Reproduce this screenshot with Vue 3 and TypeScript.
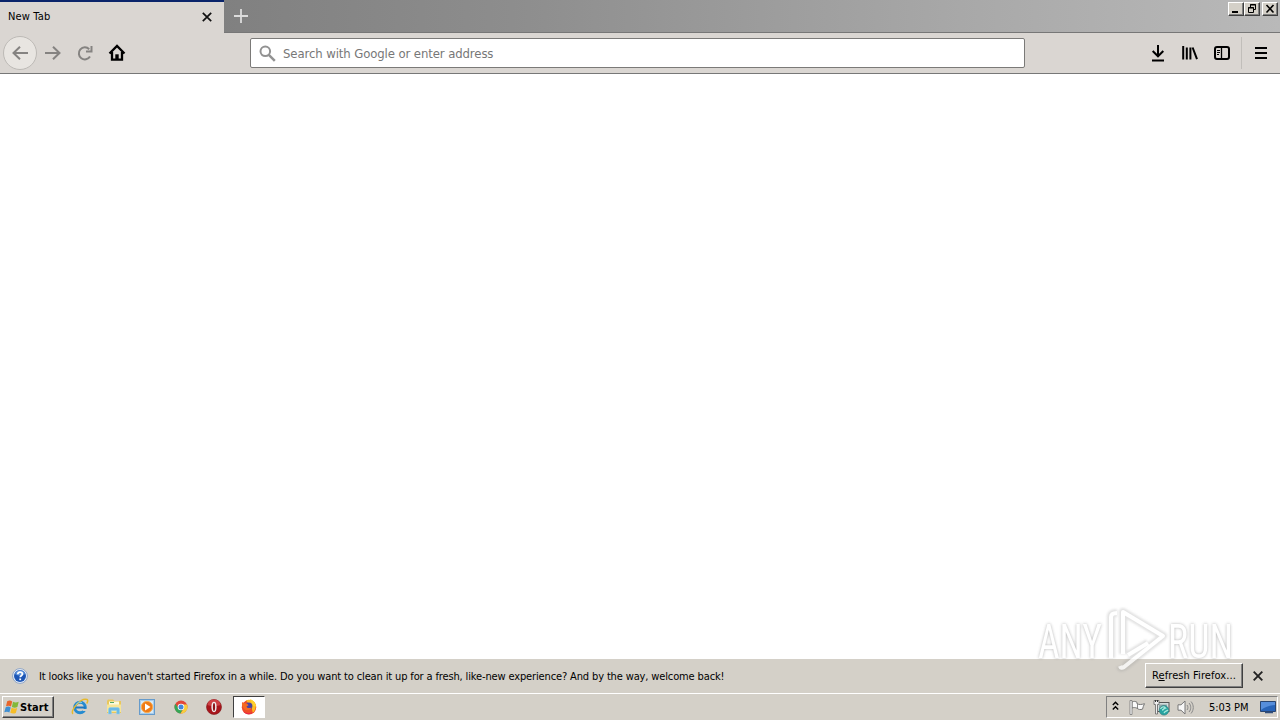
<script setup lang="ts">
import { ref } from 'vue'

const address = ref('')
const showNotice = ref(true)
const tabTitle = 'New Tab'
const notice =
  "It looks like you haven't started Firefox in a while. Do you want to clean it up for a fresh, like-new experience? And by the way, welcome back!"
const clock = '5:03 PM'
</script>

<template>
  <div class="desktop">
    <header class="titlebar">
      <div class="tab">
        <span class="tab-title">{{ tabTitle }}</span>
        <svg class="tab-close" width="10" height="10" viewBox="0 0 10 10">
          <path d="M.8.8l8.400 8.400M9.200.8L.8 9.200" stroke="#111" stroke-width="1.700" />
        </svg>
      </div>
      <svg class="new-tab" width="14" height="14" viewBox="0 0 14 14">
        <path d="M7 0v14M0 7h14" stroke="#dcdcdc" stroke-width="1.800" />
      </svg>
      <div class="window-buttons">
        <button class="win-btn">
          <svg width="14" height="12" viewBox="0 0 14 12"><path d="M3 9h6" stroke="#000" stroke-width="2" /></svg>
        </button>
        <button class="win-btn">
          <svg width="14" height="12" viewBox="0 0 14 12" fill="none" stroke="#000">
            <path d="M5.500 4V1.500h5v5H9M5 2h6M3.500 4.500h5v5h-5zM3 5h6" />
          </svg>
        </button>
        <button class="win-btn win-close">
          <svg width="14" height="12" viewBox="0 0 14 12"><path d="M3.500 2l7 7.500M10.500 2l-7 7.500" stroke="#000" stroke-width="1.600" /></svg>
        </button>
      </div>
    </header>

    <nav class="toolbar">
      <div class="back">
        <svg width="16" height="16" viewBox="0 0 16 16" class="nav-icon dim">
          <path d="M16 8H1.500M8 1.800L1.500 8 8 14.200" />
        </svg>
      </div>
      <svg width="16" height="16" viewBox="0 0 16 16" class="nav-icon dim forward">
        <path d="M0 8h14.500M8 1.800L14.500 8 8 14.200" />
      </svg>
      <svg width="16" height="16" viewBox="0 0 16 16" class="nav-icon dim reload">
        <path d="M13 11.500A6 6 0 1 1 12.200 4.200M9 6.500h5.500V1" />
      </svg>
      <svg width="18" height="18" viewBox="0 0 18 18" class="nav-icon home">
        <path d="M1.500 9.500L9 2l7.500 7.500M4 8v7.600h10V8" stroke-width="2.300" />
        <path d="M7.300 16v-5.700h3.400V16z" fill="#000" stroke="none" />
      </svg>
      <div class="urlbar">
        <svg width="17" height="17" viewBox="0 0 17 17" fill="none" stroke="#929292">
          <circle cx="6.300" cy="6.300" r="4.800" stroke-width="2" />
          <path d="M9.800 9.800l6 6" stroke-width="2.500" />
        </svg>
        <input v-model="address" type="text" placeholder="Search with Google or enter address" />
      </div>
      <div class="tools">
        <svg width="16" height="18" viewBox="0 0 16 18" class="nav-icon">
          <path d="M8 1v11M2.700 7L8 12.300 13.300 7M2 16.500h12" />
        </svg>
        <svg width="16" height="16" viewBox="0 0 16 16" class="nav-icon library">
          <path d="M1.200 1v13.500M4.800 2.500v12M8.400 2.500v12M10.600 2.500L15 14.200" />
        </svg>
        <svg width="16" height="14" viewBox="0 0 16 14" class="nav-icon sidebar">
          <rect x="1" y="1" width="14" height="12" rx="2" />
          <path d="M7.500 1v12" stroke-width="1.300" />
          <path d="M3 4.500h3M3 6.500h3M3 8.500h2" stroke-width="1" />
        </svg>
        <span class="tool-divider"></span>
        <svg width="12" height="12" viewBox="0 0 12 12" class="nav-icon">
          <path d="M0 1h12M0 6h12M0 11h12" />
        </svg>
      </div>
    </nav>

    <main class="page"></main>

    <section v-if="showNotice" class="notice">
      <svg width="16" height="16" viewBox="0 0 16 16" class="help">
        <circle cx="8" cy="8" r="7.400" fill="#e9f0fa" stroke="#8fa4c4" />
        <circle cx="8" cy="8" r="6" fill="#1d56b5" />
        <path d="M3 6a5.200 5.200 0 0 1 10 0c-3 2-7 2-10 0z" fill="#5c92dc" />
        <path d="M5.800 6.300c0-3 4.600-2.800 4.600-.2 0 1.700-2.200 1.600-2.200 3.200" fill="none" stroke="#fff" stroke-width="1.700" />
        <rect x="7.300" y="10.500" width="1.800" height="1.700" fill="#fff" />
      </svg>
      <span class="notice-text">{{ notice }}</span>
      <button class="refresh"><span>R<u>e</u>fresh Firefox...</span></button>
      <svg class="notice-close" width="10" height="10" viewBox="0 0 10 10" @click="showNotice = false">
        <path d="M.7.7l8.600 8.600M9.300.7L.7 9.300" stroke="#222" stroke-width="1.900" />
      </svg>
    </section>

    <footer class="taskbar">
      <button class="start">
        <svg width="16" height="16" viewBox="0 0 16 16">
          <path d="M3.200 2.200c2-1 3.500-.8 5 .2L7 7.500c-1.700-1-3.200-1-5-.2z" fill="#e8652b" />
          <path d="M9 2.800c1.800 1 3.500.9 5.700 0L13.400 8c-2 .9-3.700.8-5.500-.1z" fill="#83b83b" />
          <path d="M1.700 8.200c1.900-.9 3.500-.8 5 .2l-1.300 5.100c-1.600-1-3.200-1-5.100-.2z" fill="#3f8fd2" />
          <path d="M7.600 8.800c1.800 1 3.500.9 5.600.1L11.800 14c-2 .9-3.700.8-5.500-.2z" fill="#f6bd27" />
        </svg>
        <span>Start</span>
      </button>

      <div class="launchers">
        <svg width="18" height="18" viewBox="0 0 18 18">
          <circle cx="9" cy="9.500" r="5.300" fill="none" stroke="#258bd0" stroke-width="3" />
          <path d="M4 9.500h10.500" stroke="#1c76c0" stroke-width="2" />
          <path d="M11 11h6v2h-5z" fill="#d4d0c8" />
          <path d="M2 15.800C-1.500 13 10-1 16 1.500c1.200.6.700 2.500-.3 4" fill="none" stroke="#e6b92c" stroke-width="1.500" />
          <path d="M5 6.500a5 5 0 0 1 6-2" fill="none" stroke="#7bcbed" />
        </svg>
        <svg width="18" height="18" viewBox="0 0 18 18">
          <path d="M2 3l1-1.500h5L9.500 3H16v12H2z" fill="#e9c75d" />
          <path d="M4 3.500h10v5H4z" fill="#fafadd" />
          <path d="M5 4.500h4" stroke="#55a862" />
          <path d="M2 6.500h14V14H2z" fill="#f7e596" />
          <path d="M3.500 16v-4.500c0-1.500 1-2 2-2h7c1.500 0 2 .8 2 2V16h-2.800v-3.500H6.300V16z" fill="#69b9e6" stroke="#91d0ef" stroke-width=".6" />
        </svg>
        <svg width="18" height="18" viewBox="0 0 18 18">
          <rect x="1.500" y="1.500" width="15" height="15" fill="#a8cdec" stroke="#669bcb" />
          <rect x="3" y="3" width="12" height="12" fill="#d6e9f7" />
          <circle cx="9" cy="9" r="5.700" fill="#ef7b16" stroke="#f9ae55" />
          <path d="M7 5.500L12.500 9 7 12.500z" fill="#fff" />
        </svg>
        <svg width="18" height="18" viewBox="0 0 18 18">
          <circle cx="9" cy="9" r="6.500" fill="#e2473a" />
          <path d="M3.300 5.800A6.500 6.500 0 0 0 8.500 15.500L11.600 10 6.400 10z" fill="#35a657" />
          <path d="M15 6.400A6.500 6.500 0 0 1 8.500 15.500L11.700 10.500 11 6.400z" fill="#f7ce3e" />
          <circle cx="9" cy="9" r="3.300" fill="#fff" />
          <circle cx="9" cy="9" r="2.500" fill="#4286dc" />
        </svg>
        <svg width="18" height="18" viewBox="0 0 18 18">
          <circle cx="9" cy="9" r="7.500" fill="#a8161c" stroke="#7f1519" stroke-width=".6" />
          <path d="M2.500 7a6.600 6.600 0 0 1 13 0c-3.500 1.500-9.500 1.500-13 0z" fill="#cf4144" />
          <ellipse cx="9" cy="9" rx="2.600" ry="5.200" fill="#eee" />
          <ellipse cx="9" cy="9" rx="1.100" ry="4" fill="#8e1418" />
        </svg>
      </div>

      <div class="task-active">
        <svg width="18" height="18" viewBox="0 0 18 18">
          <circle cx="9" cy="9.300" r="7.200" fill="#ef4d28" />
          <path d="M6 2.500C9 1 13 2 15 5c1.500 3 .5 8-2.500 10 .5-5-3-8-6.500-12.500z" fill="#ffbd22" />
          <path d="M10 1c3 1 5.800 4 6.100 7.500L13 8z" fill="#ffd22d" />
          <circle cx="8.800" cy="8" r="3.600" fill="#4a43a1" />
          <path d="M2 4l2 1.200 3 .3 1.500 1.700-2 1.300c.5 2 3.500 2 5 .7 0 3-4.500 4-7 2C2.600 9.500 1.600 7 2 4z" fill="#f56b20" />
          <path d="M2.500 12c3 4 8 4 11 1.500-2 3.500-8.500 4-11-1.500z" fill="#e6254c" />
        </svg>
      </div>

      <div class="tray">
        <svg class="chevrons" width="7" height="10" viewBox="0 0 7 10" fill="none" stroke="#000" stroke-width="1.400">
          <path d="M.8 4l2.700-2.700L6.200 4M.8 8.500l2.700-2.700 2.700 2.700" />
        </svg>
        <svg class="flag" width="17" height="17" viewBox="0 0 17 17">
          <path d="M3 3c2-1 3.500-.7 5 .3v1.500c2 1 4.500.9 7.500-.1-.9 1.800-1.500 3.500-2 5.500-2 .6-4 .5-5.500-1-1.800-.8-3.200-.9-5-.2z" fill="#fafafa" stroke="#777" />
          <path d="M8.500 4v5" stroke="#888" />
          <path d="M1 1.500h2v14H1z" fill="#fff" stroke="#777" stroke-width=".8" />
        </svg>
        <svg class="network" width="17" height="17" viewBox="0 0 17 17">
          <rect x="4" y="3.500" width="12" height="9" fill="#d3dcdc" stroke="#555" />
          <rect x="6" y="5.500" width="8" height="5" fill="#8fa8aa" />
          <path d="M1 1.500h5v4H4.500V15H2.500V5.500H1z" fill="#eee" stroke="#666" stroke-width=".8" />
          <path d="M2.500 1v2M4.500 1v2" stroke="#333" />
          <circle cx="11" cy="11.300" r="4.800" fill="#27a4a1" stroke="#397e80" stroke-width=".7" />
          <path d="M7.500 10c1.500-3 4-2.500 5-1-2 0-1.500 2-3.500 2M11 14c1-2 3-2 4-3" fill="none" stroke="#a6e7d9" stroke-width="1.300" />
        </svg>
        <svg class="speaker" width="17" height="17" viewBox="0 0 17 17" fill="none">
          <path d="M1 5.800h3L8 2v13l-4-3.800H1z" fill="#f7f7f7" stroke="#777" />
          <path d="M10 6c1.200 1.500 1.200 3.500 0 5M12 4c2.300 2.500 2.300 6.500 0 9M14 2.500c3 3.500 3 8.500 0 12" stroke="#888" />
        </svg>
        <span class="clock">{{ clock }}</span>
        <svg class="show-desktop" width="16" height="13" viewBox="0 0 16 13">
          <path d="M.5.500h15v10H.5z" fill="#2864b8" stroke="#294570" />
          <path d="M1 1h14v3C10 4 5 6 1 9z" fill="#568edb" />
          <path d="M5 11.500h8" stroke="#314e7c" stroke-width="1.500" />
        </svg>
      </div>
    </footer>

    <svg class="watermark" width="230" height="76" viewBox="0 0 230 76">
      <g fill="none" stroke-linejoin="round">
        <path class="mark-halo" d="M77 54V13q0-4 6-4M89 50V8l40 24-39 31q-3 2-4-1M94 51l20-12" />
        <path class="mark-line" d="M77 54V13q0-4 6-4M89 50V8l40 24-39 31q-3 2-4-1M94 51l20-12" />
      </g>
      <text x="4" y="54" textLength="64" lengthAdjust="spacingAndGlyphs">ANY</text>
      <text x="134" y="54" textLength="65" lengthAdjust="spacingAndGlyphs">RUN</text>
    </svg>
  </div>
</template>

<style>
body {
  margin: 0;
  overflow: hidden;
}
</style>

<style scoped>
.desktop {
  position: relative;
  display: flex;
  flex-direction: column;
  width: 1280px;
  height: 720px;
  background: #fff;
  font-family: 'DejaVu Sans Condensed', 'DejaVu Sans', sans-serif;
  font-size: 11px;
  font-stretch: condensed;
  color: #000;
}

.desktop * {
  box-sizing: border-box;
}

svg {
  display: block;
  flex: none;
}

button {
  margin: 0;
  padding: 0;
  font: inherit;
  color: inherit;
  background: #d4d0c8;
  border: 1px solid;
  border-color: #fff #404040 #404040 #fff;
  border-radius: 0;
  box-shadow: inset -1px -1px #808080;
}

.titlebar {
  display: flex;
  flex: none;
  height: 33px;
  background: linear-gradient(90deg, #808080 17%, #8d8d8d 40%, #a8a8a8 75%, #b9b9b9);
  border-bottom: 1px solid #777;
}

.tab {
  display: flex;
  align-items: center;
  justify-content: space-between;
  width: 224px;
  height: 33px;
  padding: 0 12px 2px 8px;
  background: #dad6d2;
  border-top: 2px solid #0a246a;
}

.tab-title {
  letter-spacing: 0.15px;
}

.new-tab {
  margin: 9px 0 0 10px;
}

.window-buttons {
  display: flex;
  margin: 2px 2px 0 auto;
}

.win-btn {
  width: 16px;
  height: 14px;
}

.win-close {
  margin-left: 2px;
}

.toolbar {
  display: flex;
  flex: none;
  align-items: center;
  height: 41px;
  padding-left: 3px;
  background: #dad6d2;
  border-bottom: 1px solid #777;
}

.nav-icon {
  fill: none;
  stroke: #000;
  stroke-width: 2;
}

.dim {
  stroke: #858381;
}

.back {
  display: flex;
  align-items: center;
  justify-content: center;
  width: 34px;
  height: 34px;
  background: #e8e5e1;
  border: 1px solid #bdbab6;
  border-radius: 50%;
}

.forward {
  margin-left: 8px;
}

.reload {
  margin-left: 16px;
}

.home {
  margin-left: 15px;
}

.urlbar {
  display: flex;
  align-items: center;
  width: 775px;
  height: 30px;
  margin-left: 124px;
  padding-left: 8px;
  background: #fff;
  border: 1px solid #7b7a78;
  border-radius: 2px;
}

.urlbar input {
  flex: 1;
  height: 24px;
  margin-left: 7px;
  padding: 0;
  font: 13px 'DejaVu Sans Condensed', 'DejaVu Sans', sans-serif;
  letter-spacing: -0.1px;
  border: 0;
  outline: 0;
}

.urlbar input::placeholder {
  color: #777;
}

.tools {
  display: flex;
  align-items: center;
  margin-left: auto;
  padding-right: 13px;
}

.library {
  margin-left: 16px;
}

.sidebar {
  margin-left: 16px;
}

.tool-divider {
  width: 1px;
  height: 32px;
  margin: 0 13px 0 11px;
  background: #c1beba;
}

.page {
  flex: 1;
}

.notice {
  display: flex;
  flex: none;
  align-items: center;
  height: 34px;
  padding-left: 12px;
  background: #d4d0c8;
}

.notice-text {
  margin-left: 11px;
  white-space: nowrap;
  letter-spacing: -0.136px;
}

.refresh {
  width: 98px;
  height: 25px;
  margin: 0 10px 2px auto;
}

.refresh span {
  letter-spacing: 0.08px;
}

.notice-close {
  margin-right: 17px;
}

.taskbar {
  display: flex;
  flex: none;
  align-items: center;
  height: 27px;
  padding: 0 2px;
  background: #d4d0c8;
  border-top: 1px solid #fff;
}

.start {
  display: flex;
  align-items: center;
  width: 52px;
  height: 22px;
  padding-left: 1px;
  font-weight: 700;
}

.start span {
  letter-spacing: 0.1px;
}

.launchers {
  display: flex;
  gap: 15.6px;
  margin-left: 17px;
}

.task-active {
  display: flex;
  align-items: center;
  justify-content: center;
  width: 32px;
  height: 22px;
  margin-left: 10px;
  background: #fff;
  border: 1px solid;
  border-color: #404040 #fff #fff #404040;
}

.tray {
  display: flex;
  align-items: center;
  width: 172px;
  height: 22px;
  margin-left: auto;
  padding-left: 5px;
  border: 1px solid;
  border-color: #808080 #fff #fff #808080;
}

.chevrons {
  margin-bottom: 2px;
}

.flag {
  margin-left: 10px;
}

.network {
  margin-left: 7px;
}

.speaker {
  margin-left: 7px;
}

.clock {
  width: 50px;
  margin-left: 15px;
  white-space: nowrap;
  letter-spacing: -0.05px;
}

.show-desktop {
  margin-left: 1px;
}

/* translucent logo floating above the page and the notice bar */
.watermark {
  position: absolute;
  top: 604px;
  left: 1034px;
  pointer-events: none;
  opacity: 0.75;
}

.mark-halo {
  stroke: #999;
  stroke-opacity: 0.38;
  stroke-width: 8px;
  filter: blur(1px);
}

.mark-line {
  stroke: #fff;
  stroke-width: 4px;
}

.watermark text {
  font-family: Roboto, sans-serif;
  font-size: 49px;
  fill: #fff;
  filter: drop-shadow(0 0 1.5px rgba(90, 90, 90, 0.6));
}
</style>
